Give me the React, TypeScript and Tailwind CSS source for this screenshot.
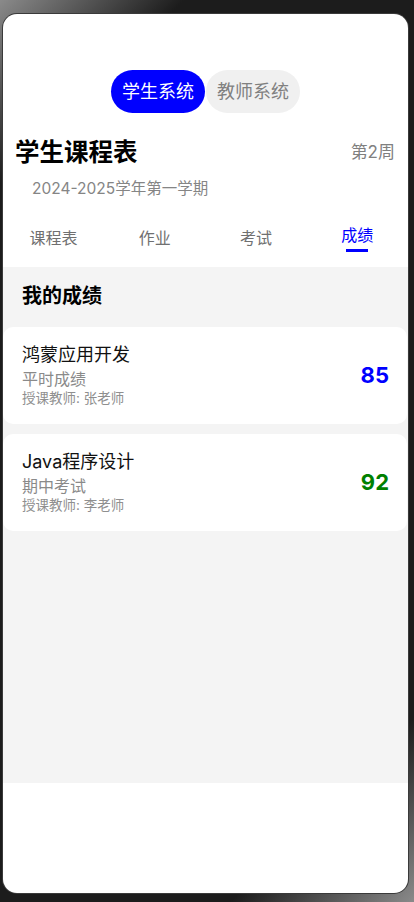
import React from "react";

const font = { fontFamily: 'Inter, "Noto Sans CJK SC", sans-serif' };

function GradeCard({ title, kind, teacher, score, color }: { title: string; kind: string; teacher: string; score: string; color: string }) {
  return (
    <div className="flex items-center justify-between bg-white rounded-[10px] pl-[19px] pr-[18px] pt-[16px] pb-[17px]">
      <div className="flex flex-col">
        <div className="text-[18px] leading-[24px] text-[#111]">{title}</div>
        <div className="mt-[2px] text-[16px] leading-[20px] text-[#8a8a8a]">{kind}</div>
        <div className="text-[13.5px] leading-[18px] text-[#8f8f8f]">{teacher}</div>
      </div>
      <div className={`text-[22px] leading-[30px] font-bold ${color}`}>{score}</div>
    </div>
  );
}

export default function App() {
  const tabs = ["课程表", "作业", "考试", "成绩"];
  return (
    <div
      className="w-[414px] h-[902px] bg-[linear-gradient(135deg,#8a8a8a_0%,#1c1c1c_14%,#1c1c1c_86%,#8a8a8a_100%)] pt-[14px] pl-[3px]"
      style={font}
    >
      <div className="w-[405px] h-[879px] bg-white rounded-[14px] overflow-hidden flex flex-col ring-1 ring-[#3a3a3a]">
        <div className="pt-[56px] flex justify-center gap-[1px]">
          <div className="w-[94px] h-[43px] rounded-full bg-[#0000ff] text-white text-[18px] flex items-center justify-center">学生系统</div>
          <div className="w-[94px] h-[43px] rounded-full bg-[#f0f0f0] text-[#808080] text-[18px] flex items-center justify-center">教师系统</div>
        </div>
        <div className="mt-[23px] pl-[12px] pr-[13px] flex items-center justify-between">
          <div className="text-[24.5px] leading-[32px] font-bold text-black">学生课程表</div>
          <div className="text-[17px] leading-[24px] text-[#808080]">第2周</div>
        </div>
        <div className="mt-[11px] pl-[29px] text-[15.5px] leading-[20px] text-[#858585]">2024-2025学年第一学期</div>
        <div className="mt-[20px] h-[48px] flex">
          {tabs.map((t, i) =>
            i === 3 ? (
              <div key={t} className="flex-1 flex flex-col items-center pt-[6px]">
                <div className="text-[16px] leading-[20px] text-[#0000ff]">{t}</div>
                <div className="mt-[4px] w-[22px] h-[3px] bg-[#0000ff]" />
              </div>
            ) : (
              <div key={t} className="flex-1 flex flex-col items-center pt-[9px]">
                <div className="text-[16px] leading-[20px] text-[#707070]">{t}</div>
              </div>
            )
          )}
        </div>
        <div className="h-[516px] bg-[#f4f4f4] flex flex-col">
          <div className="pt-[15px] pl-[19px] text-[20px] leading-[28px] font-bold text-black">我的成绩</div>
          <div className="mt-[17px] mr-[1px] flex flex-col gap-[10px]">
            <GradeCard title="鸿蒙应用开发" kind="平时成绩" teacher="授课教师: 张老师" score="85" color="text-[#0000ff]" />
            <GradeCard title="Java程序设计" kind="期中考试" teacher="授课教师: 李老师" score="92" color="text-[#008000]" />
          </div>
        </div>
      </div>
    </div>
  );
}
